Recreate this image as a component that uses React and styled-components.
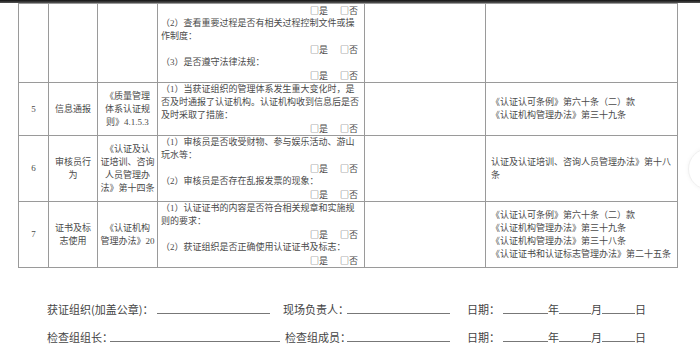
import styled, { createGlobalStyle } from "styled-components";

const GlobalStyle = createGlobalStyle`
  body {
    margin: 0;
    background: #fff;
  }
`;

const Page = styled.div`
  width: 700px;
  height: 348px;
  overflow: hidden;
  position: relative;
  background: #fff;
`;

const TopBar = styled.div`
  height: 3px;
  background: linear-gradient(#111, #555);
`;

const Table = styled.table`
  margin-left: 18px;
  width: 659px;
  border-collapse: collapse;
  table-layout: fixed;
  font-family: "Liberation Serif", "Noto Sans CJK SC", serif;
  font-size: 9px;
  line-height: 13px;
  color: #4a4a4a;
`;

const Row = styled.tr`
  height: ${(p) => p.$h}px;
`;

const Cell = styled.td`
  border: 1px solid #9a9a9a;
  padding: ${(p) => (p.$pad ? p.$pad : "0")};
  vertical-align: ${(p) => (p.$top ? "top" : "middle")};
  text-align: ${(p) => (p.$center ? "center" : "left")};
`;

const Line = styled.div`
  white-space: nowrap;
`;

const Check = styled.div`
  display: flex;
  justify-content: flex-end;
  gap: 12px;
  white-space: nowrap;
  font-family: "Noto Sans CJK SC", sans-serif;
`;

const Footer = styled.div`
  margin-top: 34px;
  padding-left: 47px;
  display: flex;
  flex-direction: column;
  gap: 14px;
  font-family: "Noto Sans CJK SC", "Liberation Sans", sans-serif;
  font-size: 11px;
  color: #444;
`;

const SignRow = styled.div`
  display: flex;
  align-items: flex-end;
  height: 14px;
  line-height: 14px;
`;

const Label = styled.span`
  width: ${(p) => p.$w}px;
  margin-left: ${(p) => p.$ml || 0}px;
  white-space: nowrap;
`;

const Blank = styled.span`
  display: inline-block;
  width: ${(p) => p.$w}px;
  height: 11px;
  border-bottom: 1px solid #777;
  margin-bottom: 2px;
`;

const FloatBtn = styled.div`
  position: absolute;
  right: -30px;
  top: 148px;
  width: 40px;
  height: 40px;
  border-radius: 50%;
  border: 1px solid #f0f0f0;
  box-shadow: 0 0 4px rgba(0, 0, 0, 0.05);
  background: #fff;
`;

const CheckLine = () => (
  <Check>
    <span>□是</span>
    <span>□否</span>
  </Check>
);

const Lines = ({ items }) =>
  items.map((t, i) =>
    t === null ? <CheckLine key={i} /> : <Line key={i}>{t}</Line>
  );

const rows = [
  {
    h: 78,
    no: "",
    item: [],
    basis: [],
    content: [
      null,
      "（2）查看重要过程是否有相关过程控制文件或操",
      "作制度：",
      null,
      "（3）是否遵守法律法规：",
      null,
    ],
    law: [],
  },
  {
    h: 52,
    no: "5",
    item: ["信息通报"],
    basis: ["《质量管理", "体系认证规", "则》4.1.5.3"],
    content: [
      "（1）当获证组织的管理体系发生重大变化时，是",
      "否及时通报了认证机构。认证机构收到信息后是否",
      "及时采取了措施：",
      null,
    ],
    law: ["《认证认可条例》第六十条（二）款", "《认证机构管理办法》第三十九条"],
  },
  {
    h: 65,
    no: "6",
    item: ["审核员行", "为"],
    basis: ["《认证及认", "证培训、咨询", "人员管理办", "法》第十四条"],
    content: [
      "（1）审核员是否收受财物、参与娱乐活动、游山",
      "玩水等：",
      null,
      "（2）审核员是否存在乱报发票的现象：",
      null,
    ],
    law: ["认证及认证培训、咨询人员管理办法》第十八", "条"],
  },
  {
    h: 65,
    no: "7",
    item: ["证书及标", "志使用"],
    basis: ["《认证机构", "管理办法》20"],
    content: [
      "（1）认证证书的内容是否符合相关规章和实施规",
      "则的要求：",
      null,
      "（2）获证组织是否正确使用认证证书及标志：",
      null,
    ],
    law: [
      "《认证认可条例》第六十条（二）款",
      "《认证机构管理办法》第三十九条",
      "《认证机构管理办法》第三十八条",
      "《认证证书和认证标志管理办法》第二十五条",
    ],
  },
];

const DateGroup = () => (
  <>
    <Label $w={36} $ml={17}>日期：</Label>
    <Blank $w={45} />
    <span>年</span>
    <Blank $w={32} />
    <span>月</span>
    <Blank $w={33} />
    <span>日</span>
  </>
);

export default function App() {
  return (
    <Page>
      <GlobalStyle />
      <TopBar />
      <Table>
        <colgroup>
          <col style={{ width: 30 }} />
          <col style={{ width: 49 }} />
          <col style={{ width: 60 }} />
          <col style={{ width: 207 }} />
          <col style={{ width: 121 }} />
          <col style={{ width: 192 }} />
        </colgroup>
        <tbody>
          {rows.map((r, i) => (
            <Row key={i} $h={r.h}>
              <Cell $center>{r.no}</Cell>
              <Cell $center>
                <Lines items={r.item} />
              </Cell>
              <Cell $center>
                <Lines items={r.basis} />
              </Cell>
              <Cell $top $pad="0 6px 0 3px">
                <Lines items={r.content} />
              </Cell>
              <Cell />
              <Cell $pad="0 4px 0 5px">
                <Lines items={r.law} />
              </Cell>
            </Row>
          ))}
        </tbody>
      </Table>
      <Footer>
        <SignRow>
          <Label $w={110}>获证组织(加盖公章)：</Label>
          <Blank $w={113} />
          <Label $w={64} $ml={13}>现场负责人：</Label>
          <Blank $w={103} />
          <DateGroup />
        </SignRow>
        <SignRow>
          <Label $w={63}>检查组组长：</Label>
          <Blank $w={170} />
          <Label $w={62} $ml={5}>检查组成员：</Label>
          <Blank $w={103} />
          <DateGroup />
        </SignRow>
      </Footer>
      <FloatBtn />
    </Page>
  );
}
